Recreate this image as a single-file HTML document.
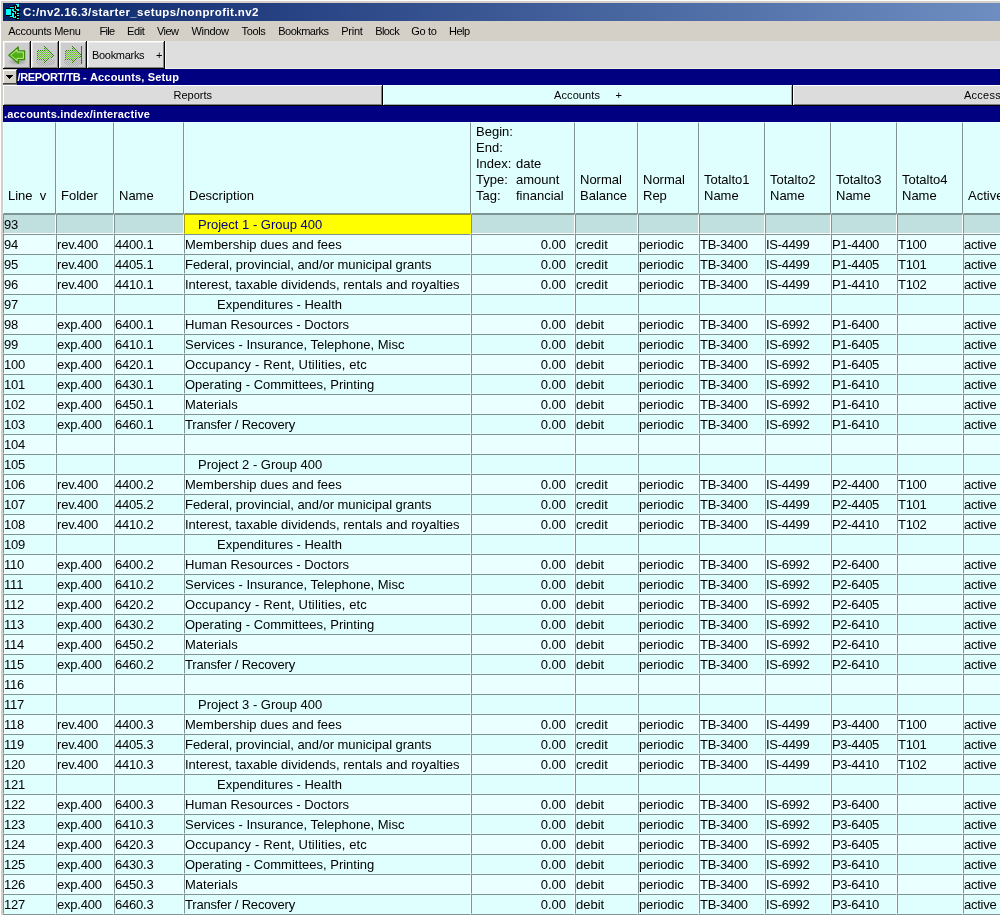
<!DOCTYPE html>
<html>
<head>
<meta charset="utf-8">
<title>C:/nv2.16.3/starter_setups/nonprofit.nv2</title>
<style>
*{box-sizing:border-box;margin:0;padding:0}
html,body{width:1000px;height:915px;overflow:hidden;background:#d4d0c8}
body{position:relative;font-family:"Liberation Sans",sans-serif;font-size:13px;color:#000}
#w{position:absolute;left:0;top:0;width:1000px;height:915px;overflow:hidden;will-change:transform}
.abs{position:absolute}
#frameL{left:0;top:0;width:1px;height:915px;background:#fff}
#frameT{left:0;top:0;width:1000px;height:1px;background:#fff}
#title{left:3px;top:3px;width:997px;height:18px;background:linear-gradient(to right,#0a246a 0px,#6e8ec1 997px);color:#fff;font-weight:bold;font-size:11.5px;line-height:18px;white-space:nowrap}
#title span{position:absolute;left:20px;top:0;letter-spacing:.4px}
#menu{left:3px;top:21px;width:997px;height:20px;background:#d4d0c8;font-size:11px;line-height:20px;white-space:nowrap}
#menu span{position:absolute;top:0}
#tool{left:3px;top:41px;width:997px;height:28px;background:#dcdcdc}
.btn{position:absolute;top:0;height:28px;background:#cdcdcd;box-shadow:inset -1px -1px 0 #000,inset 1px 1px 0 #fff,inset -2px -2px 0 #858585,inset 2px 2px 0 #e6e6e6}
#nav1{left:3px;top:69px;width:997px;height:16px;background:#000080;color:#fff;font-weight:bold;font-size:11px;line-height:16px;white-space:nowrap}
#tabs{left:3px;top:85px;width:997px;height:21px;background:#dcdcdc}
.tab{position:absolute;top:0;height:21px;font-size:11px;line-height:19px;white-space:nowrap;background:#dcdcdc;box-shadow:inset -1px -1px 0 #000,inset 1px 1px 0 #fff,inset -2px -2px 0 rgba(0,0,0,.42)}
.tab span{margin:1px 0 0 1px}
#nav2{left:3px;top:106px;width:997px;height:16px;background:#000080;color:#fff;font-weight:bold;font-size:11px;line-height:16px;white-space:nowrap}
#head{left:0;top:122px;width:1000px;height:92px}
.h{position:absolute;top:0;height:92px;background:#dffefe;border-left:1px solid #ecffff;border-top:1px solid #ecffff;border-right:1px solid #7f9393;border-bottom:1px solid #7f9393;white-space:nowrap}
.ht{position:absolute;left:4px;bottom:9px;line-height:16px;letter-spacing:0}
.k{display:inline-block;width:40px}
.r{position:absolute;left:0;width:1000px;height:20px}
.c{position:absolute;top:0;height:20px;border-left:1px solid #7f9393;border-top:1px solid #7f9393;border-right:1px solid #f4ffff;border-bottom:1px solid #e2ffff;padding:2px 0 0 0;line-height:15px;white-space:nowrap;overflow:hidden;background:#dffefe}
.ev .c{background:#eaffff;border-bottom-color:#ecffff}
.sel .c{background:#c0e0e0;border-right-color:#fff;border-bottom-color:#fff}
.sel .c.yel{background:#ffff00;border-color:#a09a10 #ffff00 #ffff00 #a09a10;color:#000080}
.num{text-align:right;padding-right:8px}
.t1{padding-left:13px}
.t2{padding-left:32px}
.r .c0,.r .c1,.r .c2{letter-spacing:-.2px}
.r .c7,.r .c8,.r .c9,.r .c10{letter-spacing:-.3px}
.r .c11{letter-spacing:-.25px}
.r .c6{letter-spacing:-.12px}
.c0{left:3px;width:53px}
.c1{left:56px;width:58px}
.c2{left:114px;width:70px}
.c3{left:184px;width:287px}
.c4{left:471px;width:104px}
.c5{left:575px;width:63px}
.c6{left:638px;width:61px}
.c7{left:699px;width:66px}
.c8{left:765px;width:66px}
.c9{left:831px;width:66px}
.c10{left:897px;width:66px}
.c11{left:963px;width:66px}
</style>
</head>
<body>
<div id="w">
<div class="abs" id="title">
<svg class="abs" style="left:1px;top:0" width="18" height="18" viewBox="0 0 18 18" shape-rendering="crispEdges"><rect x="12" y="1" width="3" height="1" fill="#0ff"/><rect x="15" y="1" width="1" height="1" fill="#000"/><rect x="9" y="2" width="4" height="1" fill="#000"/><rect x="13" y="2" width="2" height="1" fill="#0ff"/><rect x="15" y="2" width="1" height="1" fill="#000"/><rect x="6" y="3" width="5" height="1" fill="#000"/><rect x="11" y="3" width="1" height="1" fill="#0ff"/><rect x="12" y="3" width="1" height="1" fill="#000"/><rect x="13" y="3" width="2" height="1" fill="#0ff"/><rect x="15" y="3" width="1" height="1" fill="#000"/><rect x="6" y="4" width="4" height="1" fill="#0ff"/><rect x="10" y="4" width="1" height="1" fill="#000"/><rect x="11" y="4" width="1" height="1" fill="#0ff"/><rect x="12" y="4" width="4" height="1" fill="#000"/><rect x="2" y="5" width="9" height="1" fill="#000"/><rect x="11" y="5" width="1" height="1" fill="#0ff"/><rect x="12" y="5" width="4" height="1" fill="#000"/><rect x="2" y="6" width="5" height="1" fill="#0ff"/><rect x="7" y="6" width="1" height="1" fill="#000"/><rect x="8" y="6" width="2" height="1" fill="#0ff"/><rect x="10" y="6" width="2" height="1" fill="#000"/><rect x="12" y="6" width="3" height="1" fill="#0ff"/><rect x="15" y="6" width="1" height="1" fill="#000"/><rect x="2" y="7" width="5" height="1" fill="#0ff"/><rect x="7" y="7" width="1" height="1" fill="#000"/><rect x="8" y="7" width="2" height="1" fill="#0ff"/><rect x="10" y="7" width="3" height="1" fill="#000"/><rect x="13" y="7" width="2" height="1" fill="#0ff"/><rect x="15" y="7" width="1" height="1" fill="#000"/><rect x="2" y="8" width="5" height="1" fill="#0ff"/><rect x="7" y="8" width="2" height="1" fill="#000"/><rect x="9" y="8" width="3" height="1" fill="#0ff"/><rect x="12" y="8" width="4" height="1" fill="#000"/><rect x="2" y="9" width="5" height="1" fill="#0ff"/><rect x="7" y="9" width="4" height="1" fill="#000"/><rect x="11" y="9" width="1" height="1" fill="#0ff"/><rect x="12" y="9" width="4" height="1" fill="#000"/><rect x="2" y="10" width="5" height="1" fill="#0ff"/><rect x="7" y="10" width="1" height="1" fill="#000"/><rect x="8" y="10" width="2" height="1" fill="#0ff"/><rect x="10" y="10" width="1" height="1" fill="#000"/><rect x="11" y="10" width="1" height="1" fill="#0ff"/><rect x="12" y="10" width="1" height="1" fill="#000"/><rect x="13" y="10" width="2" height="1" fill="#0ff"/><rect x="15" y="10" width="1" height="1" fill="#000"/><rect x="2" y="11" width="5" height="1" fill="#0ff"/><rect x="7" y="11" width="1" height="1" fill="#000"/><rect x="8" y="11" width="2" height="1" fill="#0ff"/><rect x="10" y="11" width="6" height="1" fill="#000"/><rect x="2" y="12" width="6" height="1" fill="#000"/><rect x="8" y="12" width="2" height="1" fill="#0ff"/><rect x="10" y="12" width="3" height="1" fill="#000"/><rect x="13" y="12" width="2" height="1" fill="#0ff"/><rect x="15" y="12" width="1" height="1" fill="#000"/><rect x="6" y="13" width="4" height="1" fill="#0ff"/><rect x="10" y="13" width="1" height="1" fill="#000"/><rect x="11" y="13" width="1" height="1" fill="#0ff"/><rect x="12" y="13" width="4" height="1" fill="#000"/><rect x="6" y="14" width="3" height="1" fill="#000"/><rect x="9" y="14" width="3" height="1" fill="#0ff"/><rect x="12" y="14" width="4" height="1" fill="#000"/><rect x="9" y="15" width="4" height="1" fill="#000"/><rect x="13" y="15" width="2" height="1" fill="#0ff"/><rect x="15" y="15" width="1" height="1" fill="#000"/><rect x="12" y="16" width="4" height="1" fill="#000"/></svg>
<span id="ttl">C:/nv2.16.3/starter_setups/nonprofit.nv2</span></div>
<div class="abs" id="menu">
<span style="left:5.25px;letter-spacing:-0.26px">Accounts Menu</span>
<span style="left:96.50px;letter-spacing:-0.68px">File</span>
<span style="left:124.00px;letter-spacing:-0.37px">Edit</span>
<span style="left:154.00px;letter-spacing:-0.54px">View</span>
<span style="left:188.50px;letter-spacing:-0.35px">Window</span>
<span style="left:238.50px;letter-spacing:-0.34px">Tools</span>
<span style="left:275.25px;letter-spacing:-0.53px">Bookmarks</span>
<span style="left:338.25px;letter-spacing:-0.26px">Print</span>
<span style="left:372.25px;letter-spacing:-0.63px">Block</span>
<span style="left:408.25px;letter-spacing:-0.32px">Go to</span>
<span style="left:446.00px;letter-spacing:-0.53px">Help</span>
</div>
<div class="abs" id="tool">
<svg width="0" height="0" style="position:absolute"><defs>
<pattern id="dith" width="2" height="2" patternUnits="userSpaceOnUse"><rect x="0" y="0" width="1" height="1" fill="#fff"/><rect x="1" y="1" width="1" height="1" fill="#fff"/></pattern>
<mask id="dm" maskUnits="userSpaceOnUse" x="0" y="0" width="28" height="28"><rect x="0" y="0" width="28" height="28" fill="url(#dith)"/></mask>
<linearGradient id="gg" x1="0" y1="0" x2="0" y2="1"><stop offset="0" stop-color="#7cc84a"/><stop offset="0.5" stop-color="#4faa12"/><stop offset="1" stop-color="#62c416"/></linearGradient>
<radialGradient id="sh"><stop offset="0" stop-color="#000" stop-opacity=".28"/><stop offset="1" stop-color="#000" stop-opacity="0"/></radialGradient>
</defs></svg>
<div class="btn" style="left:0;width:28px"><svg class="abs" style="left:0;top:0" width="28" height="28" viewBox="0 0 28 28">
<ellipse cx="14.5" cy="20.5" rx="10" ry="3.8" fill="url(#sh)"/>
<path d="M5.8 14.2 L15.3 6 L15.3 9.8 L21.6 9.8 L21.6 18.6 L15.3 18.6 L15.3 22.4 Z" fill="url(#gg)" stroke="#3b8a08" stroke-width="1.2" stroke-linejoin="round"/>
<path d="M7.7 14.2 L14.1 8.7 L14.1 11 L20.4 11 L20.4 17.4 L14.1 17.4 L14.1 19.7 Z" fill="none" stroke="#c4eea4" stroke-width="0.9" stroke-linejoin="round"/>
</svg></div>
<div class="btn" style="left:28px;width:28px"><svg class="abs" style="left:0;top:0" width="28" height="28" viewBox="0 0 28 28" shape-rendering="crispEdges">
<g mask="url(#dm)"><ellipse cx="14.5" cy="21" rx="10" ry="4.5" fill="#b0b0b0"/>
<path d="M23.5 14 L12.5 4.5 L12.5 9 L6 9 L6 19 L12.5 19 L12.5 23.5 Z" fill="#2f8406"/>
<path d="M21.5 14 L13.5 7 L13.5 10 L7 10 L7 18 L13.5 18 L13.5 21 Z" fill="#66c42a"/></g>
</svg></div>
<div class="btn" style="left:56px;width:28px"><svg class="abs" style="left:0;top:0" width="28" height="28" viewBox="0 0 28 28" shape-rendering="crispEdges">
<g mask="url(#dm)"><ellipse cx="14.5" cy="21" rx="10" ry="4.5" fill="#b0b0b0"/>
<path d="M23.5 14 L12.5 4.5 L12.5 9 L6 9 L6 19 L12.5 19 L12.5 23.5 Z" fill="#2f8406"/>
<path d="M21.5 14 L13.5 7 L13.5 10 L7 10 L7 18 L13.5 18 L13.5 21 Z" fill="#66c42a"/></g>
<rect x="22" y="5" width="1" height="18" fill="#0a9010"/>
</svg></div>
<div class="btn" style="left:84px;width:78px;background:#dedede;box-shadow:inset -1px -1px 0 #000,inset 1px 1px 0 #fff,inset -2px -2px 0 #858585,inset 2px 2px 0 #ececec;font-size:11px;line-height:27px"><span style="position:absolute;left:5px;top:1px;letter-spacing:-.3px">Bookmarks</span><span style="position:absolute;left:69px;top:1px">+</span></div>
</div>
<div class="abs" style="left:165px;top:41px;width:835px;height:28px;background:#dedede;border-left:1px solid #f6f6f6;border-bottom:1px solid #efefe6"></div>
<div class="abs" id="nav1"><div class="abs" style="left:0;top:0;width:14px;height:16px;background:#d4d0c8;box-shadow:inset 0 1px 0 #cfcbc3,inset 0 -1px 0 #7c7c7c,inset -1px -2px 0 #404040,inset 1px 2px 0 #fff"><svg class="abs" style="left:3px;top:6px" width="8" height="4" viewBox="0 0 8 4" shape-rendering="crispEdges"><rect x="0" y="0" width="7" height="1"/><rect x="1" y="1" width="5" height="1"/><rect x="2" y="2" width="3" height="1"/><rect x="3" y="3" width="1" height="1"/></svg></div><span class="abs" id="n1t" style="left:14.6px;top:0;letter-spacing:-.38px">/REPORT/TB -</span><span class="abs" id="n1u" style="left:87px;top:0;letter-spacing:.15px">Accounts, Setup</span></div>
<div class="abs" id="tabs">
<div class="tab" style="left:0;width:380px"><span class="abs" style="left:169.5px;top:0">Reports</span></div>
<div class="tab" style="left:380px;width:410px;background:#dffefe;box-shadow:inset -1px -1px 0 #000,inset 1px 1px 0 #eeffff,inset -2px -2px 0 rgba(0,0,0,.3)"><span class="abs" style="left:170px;top:0;letter-spacing:.1px">Accounts</span><span class="abs" style="left:231.5px;top:0">+</span></div>
<div class="tab" style="left:790px;width:410px"><span class="abs" style="left:170px;top:0;letter-spacing:.25px">Access</span></div>
</div>
<div class="abs" id="nav2"><span class="abs" id="n2t" style="left:1px;top:0;letter-spacing:.18px">.accounts.index/interactive</span></div>
<div class="abs" id="head">
<div class="h c0"><div class="ht">Line&nbsp; v</div></div>
<div class="h c1"><div class="ht">Folder</div></div>
<div class="h c2"><div class="ht">Name</div></div>
<div class="h c3"><div class="ht">Description</div></div>
<div class="h c4"><div class="ht"><span class="k">Begin:</span><br><span class="k">End:</span><br><span class="k">Index:</span>date<br><span class="k">Type:</span>amount<br><span class="k">Tag:</span>financial</div></div>
<div class="h c5"><div class="ht">Normal<br>Balance</div></div>
<div class="h c6"><div class="ht">Normal<br>Rep</div></div>
<div class="h c7"><div class="ht">Totalto1<br>Name</div></div>
<div class="h c8"><div class="ht">Totalto2<br>Name</div></div>
<div class="h c9"><div class="ht">Totalto3<br>Name</div></div>
<div class="h c10"><div class="ht">Totalto4<br>Name</div></div>
<div class="h c11"><div class="ht">Active</div></div>
</div>
<div class="r sel" style="top:214px"><div class="c c0">93</div><div class="c c1"></div><div class="c c2"></div><div class="c c3 t1 yel">Project 1 - Group 400</div><div class="c c4"></div><div class="c c5"></div><div class="c c6"></div><div class="c c7"></div><div class="c c8"></div><div class="c c9"></div><div class="c c10"></div><div class="c c11"></div></div>
<div class="r ev" style="top:234px"><div class="c c0">94</div><div class="c c1">rev.400</div><div class="c c2">4400.1</div><div class="c c3">Membership dues and fees</div><div class="c c4 num">0.00</div><div class="c c5">credit</div><div class="c c6">periodic</div><div class="c c7">TB-3400</div><div class="c c8">IS-4499</div><div class="c c9">P1-4400</div><div class="c c10">T100</div><div class="c c11">active</div></div>
<div class="r" style="top:254px"><div class="c c0">95</div><div class="c c1">rev.400</div><div class="c c2">4405.1</div><div class="c c3" style="letter-spacing:-.05px">Federal, provincial, and/or municipal grants</div><div class="c c4 num">0.00</div><div class="c c5">credit</div><div class="c c6">periodic</div><div class="c c7">TB-3400</div><div class="c c8">IS-4499</div><div class="c c9">P1-4405</div><div class="c c10">T101</div><div class="c c11">active</div></div>
<div class="r ev" style="top:274px"><div class="c c0">96</div><div class="c c1">rev.400</div><div class="c c2">4410.1</div><div class="c c3">Interest, taxable dividends, rentals and royalties</div><div class="c c4 num">0.00</div><div class="c c5">credit</div><div class="c c6">periodic</div><div class="c c7">TB-3400</div><div class="c c8">IS-4499</div><div class="c c9">P1-4410</div><div class="c c10">T102</div><div class="c c11">active</div></div>
<div class="r" style="top:294px"><div class="c c0">97</div><div class="c c1"></div><div class="c c2"></div><div class="c c3 t2">Expenditures - Health</div><div class="c c4"></div><div class="c c5"></div><div class="c c6"></div><div class="c c7"></div><div class="c c8"></div><div class="c c9"></div><div class="c c10"></div><div class="c c11"></div></div>
<div class="r ev" style="top:314px"><div class="c c0">98</div><div class="c c1">exp.400</div><div class="c c2">6400.1</div><div class="c c3">Human Resources - Doctors</div><div class="c c4 num">0.00</div><div class="c c5">debit</div><div class="c c6">periodic</div><div class="c c7">TB-3400</div><div class="c c8">IS-6992</div><div class="c c9">P1-6400</div><div class="c c10"></div><div class="c c11">active</div></div>
<div class="r" style="top:334px"><div class="c c0">99</div><div class="c c1">exp.400</div><div class="c c2">6410.1</div><div class="c c3">Services - Insurance, Telephone, Misc</div><div class="c c4 num">0.00</div><div class="c c5">debit</div><div class="c c6">periodic</div><div class="c c7">TB-3400</div><div class="c c8">IS-6992</div><div class="c c9">P1-6405</div><div class="c c10"></div><div class="c c11">active</div></div>
<div class="r ev" style="top:354px"><div class="c c0">100</div><div class="c c1">exp.400</div><div class="c c2">6420.1</div><div class="c c3" style="letter-spacing:.13px">Occupancy - Rent, Utilities, etc</div><div class="c c4 num">0.00</div><div class="c c5">debit</div><div class="c c6">periodic</div><div class="c c7">TB-3400</div><div class="c c8">IS-6992</div><div class="c c9">P1-6405</div><div class="c c10"></div><div class="c c11">active</div></div>
<div class="r" style="top:374px"><div class="c c0">101</div><div class="c c1">exp.400</div><div class="c c2">6430.1</div><div class="c c3">Operating - Committees, Printing</div><div class="c c4 num">0.00</div><div class="c c5">debit</div><div class="c c6">periodic</div><div class="c c7">TB-3400</div><div class="c c8">IS-6992</div><div class="c c9">P1-6410</div><div class="c c10"></div><div class="c c11">active</div></div>
<div class="r ev" style="top:394px"><div class="c c0">102</div><div class="c c1">exp.400</div><div class="c c2">6450.1</div><div class="c c3">Materials</div><div class="c c4 num">0.00</div><div class="c c5">debit</div><div class="c c6">periodic</div><div class="c c7">TB-3400</div><div class="c c8">IS-6992</div><div class="c c9">P1-6410</div><div class="c c10"></div><div class="c c11">active</div></div>
<div class="r" style="top:414px"><div class="c c0">103</div><div class="c c1">exp.400</div><div class="c c2">6460.1</div><div class="c c3" style="letter-spacing:-.19px">Transfer / Recovery</div><div class="c c4 num">0.00</div><div class="c c5">debit</div><div class="c c6">periodic</div><div class="c c7">TB-3400</div><div class="c c8">IS-6992</div><div class="c c9">P1-6410</div><div class="c c10"></div><div class="c c11">active</div></div>
<div class="r ev" style="top:434px"><div class="c c0">104</div><div class="c c1"></div><div class="c c2"></div><div class="c c3"></div><div class="c c4"></div><div class="c c5"></div><div class="c c6"></div><div class="c c7"></div><div class="c c8"></div><div class="c c9"></div><div class="c c10"></div><div class="c c11"></div></div>
<div class="r" style="top:454px"><div class="c c0">105</div><div class="c c1"></div><div class="c c2"></div><div class="c c3 t1">Project 2 - Group 400</div><div class="c c4"></div><div class="c c5"></div><div class="c c6"></div><div class="c c7"></div><div class="c c8"></div><div class="c c9"></div><div class="c c10"></div><div class="c c11"></div></div>
<div class="r ev" style="top:474px"><div class="c c0">106</div><div class="c c1">rev.400</div><div class="c c2">4400.2</div><div class="c c3">Membership dues and fees</div><div class="c c4 num">0.00</div><div class="c c5">credit</div><div class="c c6">periodic</div><div class="c c7">TB-3400</div><div class="c c8">IS-4499</div><div class="c c9">P2-4400</div><div class="c c10">T100</div><div class="c c11">active</div></div>
<div class="r" style="top:494px"><div class="c c0">107</div><div class="c c1">rev.400</div><div class="c c2">4405.2</div><div class="c c3" style="letter-spacing:-.05px">Federal, provincial, and/or municipal grants</div><div class="c c4 num">0.00</div><div class="c c5">credit</div><div class="c c6">periodic</div><div class="c c7">TB-3400</div><div class="c c8">IS-4499</div><div class="c c9">P2-4405</div><div class="c c10">T101</div><div class="c c11">active</div></div>
<div class="r ev" style="top:514px"><div class="c c0">108</div><div class="c c1">rev.400</div><div class="c c2">4410.2</div><div class="c c3">Interest, taxable dividends, rentals and royalties</div><div class="c c4 num">0.00</div><div class="c c5">credit</div><div class="c c6">periodic</div><div class="c c7">TB-3400</div><div class="c c8">IS-4499</div><div class="c c9">P2-4410</div><div class="c c10">T102</div><div class="c c11">active</div></div>
<div class="r" style="top:534px"><div class="c c0">109</div><div class="c c1"></div><div class="c c2"></div><div class="c c3 t2">Expenditures - Health</div><div class="c c4"></div><div class="c c5"></div><div class="c c6"></div><div class="c c7"></div><div class="c c8"></div><div class="c c9"></div><div class="c c10"></div><div class="c c11"></div></div>
<div class="r ev" style="top:554px"><div class="c c0">110</div><div class="c c1">exp.400</div><div class="c c2">6400.2</div><div class="c c3">Human Resources - Doctors</div><div class="c c4 num">0.00</div><div class="c c5">debit</div><div class="c c6">periodic</div><div class="c c7">TB-3400</div><div class="c c8">IS-6992</div><div class="c c9">P2-6400</div><div class="c c10"></div><div class="c c11">active</div></div>
<div class="r" style="top:574px"><div class="c c0">111</div><div class="c c1">exp.400</div><div class="c c2">6410.2</div><div class="c c3">Services - Insurance, Telephone, Misc</div><div class="c c4 num">0.00</div><div class="c c5">debit</div><div class="c c6">periodic</div><div class="c c7">TB-3400</div><div class="c c8">IS-6992</div><div class="c c9">P2-6405</div><div class="c c10"></div><div class="c c11">active</div></div>
<div class="r ev" style="top:594px"><div class="c c0">112</div><div class="c c1">exp.400</div><div class="c c2">6420.2</div><div class="c c3" style="letter-spacing:.13px">Occupancy - Rent, Utilities, etc</div><div class="c c4 num">0.00</div><div class="c c5">debit</div><div class="c c6">periodic</div><div class="c c7">TB-3400</div><div class="c c8">IS-6992</div><div class="c c9">P2-6405</div><div class="c c10"></div><div class="c c11">active</div></div>
<div class="r" style="top:614px"><div class="c c0">113</div><div class="c c1">exp.400</div><div class="c c2">6430.2</div><div class="c c3">Operating - Committees, Printing</div><div class="c c4 num">0.00</div><div class="c c5">debit</div><div class="c c6">periodic</div><div class="c c7">TB-3400</div><div class="c c8">IS-6992</div><div class="c c9">P2-6410</div><div class="c c10"></div><div class="c c11">active</div></div>
<div class="r ev" style="top:634px"><div class="c c0">114</div><div class="c c1">exp.400</div><div class="c c2">6450.2</div><div class="c c3">Materials</div><div class="c c4 num">0.00</div><div class="c c5">debit</div><div class="c c6">periodic</div><div class="c c7">TB-3400</div><div class="c c8">IS-6992</div><div class="c c9">P2-6410</div><div class="c c10"></div><div class="c c11">active</div></div>
<div class="r" style="top:654px"><div class="c c0">115</div><div class="c c1">exp.400</div><div class="c c2">6460.2</div><div class="c c3" style="letter-spacing:-.19px">Transfer / Recovery</div><div class="c c4 num">0.00</div><div class="c c5">debit</div><div class="c c6">periodic</div><div class="c c7">TB-3400</div><div class="c c8">IS-6992</div><div class="c c9">P2-6410</div><div class="c c10"></div><div class="c c11">active</div></div>
<div class="r ev" style="top:674px"><div class="c c0">116</div><div class="c c1"></div><div class="c c2"></div><div class="c c3"></div><div class="c c4"></div><div class="c c5"></div><div class="c c6"></div><div class="c c7"></div><div class="c c8"></div><div class="c c9"></div><div class="c c10"></div><div class="c c11"></div></div>
<div class="r" style="top:694px"><div class="c c0">117</div><div class="c c1"></div><div class="c c2"></div><div class="c c3 t1">Project 3 - Group 400</div><div class="c c4"></div><div class="c c5"></div><div class="c c6"></div><div class="c c7"></div><div class="c c8"></div><div class="c c9"></div><div class="c c10"></div><div class="c c11"></div></div>
<div class="r ev" style="top:714px"><div class="c c0">118</div><div class="c c1">rev.400</div><div class="c c2">4400.3</div><div class="c c3">Membership dues and fees</div><div class="c c4 num">0.00</div><div class="c c5">credit</div><div class="c c6">periodic</div><div class="c c7">TB-3400</div><div class="c c8">IS-4499</div><div class="c c9">P3-4400</div><div class="c c10">T100</div><div class="c c11">active</div></div>
<div class="r" style="top:734px"><div class="c c0">119</div><div class="c c1">rev.400</div><div class="c c2">4405.3</div><div class="c c3" style="letter-spacing:-.05px">Federal, provincial, and/or municipal grants</div><div class="c c4 num">0.00</div><div class="c c5">credit</div><div class="c c6">periodic</div><div class="c c7">TB-3400</div><div class="c c8">IS-4499</div><div class="c c9">P3-4405</div><div class="c c10">T101</div><div class="c c11">active</div></div>
<div class="r ev" style="top:754px"><div class="c c0">120</div><div class="c c1">rev.400</div><div class="c c2">4410.3</div><div class="c c3">Interest, taxable dividends, rentals and royalties</div><div class="c c4 num">0.00</div><div class="c c5">credit</div><div class="c c6">periodic</div><div class="c c7">TB-3400</div><div class="c c8">IS-4499</div><div class="c c9">P3-4410</div><div class="c c10">T102</div><div class="c c11">active</div></div>
<div class="r" style="top:774px"><div class="c c0">121</div><div class="c c1"></div><div class="c c2"></div><div class="c c3 t2">Expenditures - Health</div><div class="c c4"></div><div class="c c5"></div><div class="c c6"></div><div class="c c7"></div><div class="c c8"></div><div class="c c9"></div><div class="c c10"></div><div class="c c11"></div></div>
<div class="r ev" style="top:794px"><div class="c c0">122</div><div class="c c1">exp.400</div><div class="c c2">6400.3</div><div class="c c3">Human Resources - Doctors</div><div class="c c4 num">0.00</div><div class="c c5">debit</div><div class="c c6">periodic</div><div class="c c7">TB-3400</div><div class="c c8">IS-6992</div><div class="c c9">P3-6400</div><div class="c c10"></div><div class="c c11">active</div></div>
<div class="r" style="top:814px"><div class="c c0">123</div><div class="c c1">exp.400</div><div class="c c2">6410.3</div><div class="c c3">Services - Insurance, Telephone, Misc</div><div class="c c4 num">0.00</div><div class="c c5">debit</div><div class="c c6">periodic</div><div class="c c7">TB-3400</div><div class="c c8">IS-6992</div><div class="c c9">P3-6405</div><div class="c c10"></div><div class="c c11">active</div></div>
<div class="r ev" style="top:834px"><div class="c c0">124</div><div class="c c1">exp.400</div><div class="c c2">6420.3</div><div class="c c3" style="letter-spacing:.13px">Occupancy - Rent, Utilities, etc</div><div class="c c4 num">0.00</div><div class="c c5">debit</div><div class="c c6">periodic</div><div class="c c7">TB-3400</div><div class="c c8">IS-6992</div><div class="c c9">P3-6405</div><div class="c c10"></div><div class="c c11">active</div></div>
<div class="r" style="top:854px"><div class="c c0">125</div><div class="c c1">exp.400</div><div class="c c2">6430.3</div><div class="c c3">Operating - Committees, Printing</div><div class="c c4 num">0.00</div><div class="c c5">debit</div><div class="c c6">periodic</div><div class="c c7">TB-3400</div><div class="c c8">IS-6992</div><div class="c c9">P3-6410</div><div class="c c10"></div><div class="c c11">active</div></div>
<div class="r ev" style="top:874px"><div class="c c0">126</div><div class="c c1">exp.400</div><div class="c c2">6450.3</div><div class="c c3">Materials</div><div class="c c4 num">0.00</div><div class="c c5">debit</div><div class="c c6">periodic</div><div class="c c7">TB-3400</div><div class="c c8">IS-6992</div><div class="c c9">P3-6410</div><div class="c c10"></div><div class="c c11">active</div></div>
<div class="r" style="top:894px"><div class="c c0">127</div><div class="c c1">exp.400</div><div class="c c2">6460.3</div><div class="c c3" style="letter-spacing:-.19px">Transfer / Recovery</div><div class="c c4 num">0.00</div><div class="c c5">debit</div><div class="c c6">periodic</div><div class="c c7">TB-3400</div><div class="c c8">IS-6992</div><div class="c c9">P3-6410</div><div class="c c10"></div><div class="c c11">active</div></div>
<div class="r ev" style="top:914px"><div class="c c0"></div><div class="c c1"></div><div class="c c2"></div><div class="c c3"></div><div class="c c4"></div><div class="c c5"></div><div class="c c6"></div><div class="c c7"></div><div class="c c8"></div><div class="c c9"></div><div class="c c10"></div><div class="c c11"></div></div>
<div class="abs" id="frameL"></div>
<div class="abs" id="frameT"></div>
</div>
</body>
</html>
